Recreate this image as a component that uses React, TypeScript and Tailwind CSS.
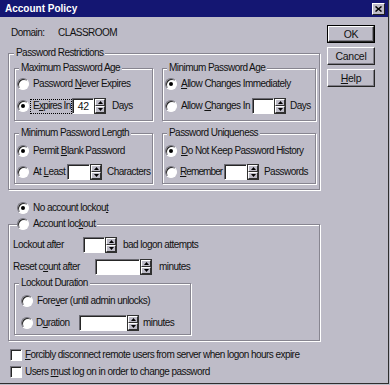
import React from "react";

const BG = "bg-[#bebcc8]";

function Radio({ checked }: { checked?: boolean }) {
  return (
    <span className="inline-flex w-[12px] h-[12px] shrink-0 rounded-full bg-white border border-t-[#77757f] border-l-[#77757f] border-b-white border-r-white shadow-[inset_1px_1px_0_#262626] items-center justify-center">
      {checked && <span className="w-[4px] h-[4px] rounded-full bg-black" />}
    </span>
  );
}

function Check() {
  return (
    <span className="inline-block w-[12px] h-[12px] shrink-0 bg-white border border-t-[#77757f] border-l-[#77757f] border-b-white border-r-white shadow-[inset_1px_1px_0_#262626]" />
  );
}

function Arrow({ up }: { up?: boolean }) {
  return (
    <div className={`w-[10px] h-[8px] ${BG} border border-t-white border-l-white border-b-[#303030] border-r-[#303030] flex items-center justify-center`}>
      <svg width="5" height="3" viewBox="0 0 5 3">
        {up ? <polygon points="2.5,0 5,3 0,3" fill="#000" /> : <polygon points="0,0 5,0 2.5,3" fill="#000" />}
      </svg>
    </div>
  );
}

function Spin({ w, value }: { w: string; value?: string }) {
  return (
    <div className="flex h-[16px] shrink-0">
      <div className={`${w} h-full bg-white border border-t-[#6b6a72] border-l-[#6b6a72] border-b-white border-r-white shadow-[inset_1px_1px_0_#262626] flex items-center justify-end pr-[4px] text-[10.5px] tracking-[-0.2px]`}>
        {value}
      </div>
      <div className="flex flex-col border border-[#303030]">
        <Arrow up />
        <Arrow />
      </div>
    </div>
  );
}

function Group({
  legend,
  className,
  legendClass,
  children,
}: {
  legend: React.ReactNode;
  className?: string;
  legendClass?: string;
  children: React.ReactNode;
}) {
  return (
    <fieldset className={`border border-[#878590] shadow-[inset_1px_1px_0_#ffffff,1px_1px_0_#ffffff] ${className ?? ""}`}>
      <legend className={`${BG} h-[12px] leading-[12px] ${legendClass ?? "px-[2px]"}`}>{legend}</legend>
      {children}
    </fieldset>
  );
}

function RadioRow({ checked, children, className }: { checked?: boolean; children: React.ReactNode; className?: string }) {
  return (
    <div className={`flex items-center h-[14px] ${className ?? ""}`}>
      <Radio checked={checked} />
      <span className="ml-[4px] whitespace-nowrap">{children}</span>
    </div>
  );
}

function Btn({ children, def }: { children: React.ReactNode; def?: boolean }) {
  return (
    <div className={`w-[48px] h-[18px] ${def ? "border border-black" : ""}`}>
      <div className="w-full h-full border border-t-white border-l-white border-b-[#262626] border-r-[#262626] shadow-[inset_-1px_-1px_0_#807e88] flex items-center justify-center text-[10.5px] tracking-[-0.3px]">
        {children}
      </div>
    </div>
  );
}

export default function App() {
  return (
    <div className={`w-[390px] h-[385px] ${BG} font-['Liberation_Sans',Arial,sans-serif] text-[10px] tracking-[-0.55px] text-[#111] leading-none`}>
      <div className="w-[389px] h-[384px] border-r border-b border-[#2e2e2e] flex flex-col">
        {/* Title bar */}
        <div className="h-[17px] bg-[#141672] flex items-center justify-between pl-[5px] pr-[3px]">
          <span className="text-white font-bold text-[10px] tracking-normal">Account Policy</span>
          <div className={`w-[13px] h-[12px] ${BG} border border-t-white border-l-white border-b-[#202020] border-r-[#202020] flex items-center justify-center`}>
            <svg width="7" height="6" viewBox="0 0 7 6">
              <path d="M0.5 0.5 L6.5 5.5 M6.5 0.5 L0.5 5.5" stroke="#000" strokeWidth="1.5" />
            </svg>
          </div>
        </div>

        <div className="flex flex-1">
          {/* Left column */}
          <div className="w-[320px] pl-[8px] flex flex-col">
            <div className="mt-[10px] h-[12px] flex items-center pl-[3px]">
              <span className="w-[47px]">Domain:</span>
              <span>CLASSROOM</span>
            </div>

            <Group legend="Password Restrictions" className="mt-[8px] w-[312px] pl-[5px] pr-[3px] pb-[5px]">
              <div className="flex gap-[9px] mt-[3px]">
                <Group legend="Maximum Password Age" className="w-[139px] pl-[2px] pb-[6px]" legendClass="ml-[2px] px-[2px]">
                  <div className="flex flex-col pt-[3px]">
                    <RadioRow>
                      Password <u>N</u>ever Expires
                    </RadioRow>
                    <div className="flex items-center h-[16px] mt-[7px]">
                      <Radio checked />
                      <span className="ml-[1px] w-[42px] h-[15px] flex items-center pl-[2px] border border-dotted border-black whitespace-nowrap tracking-[-0.7px]">
                        E<u>x</u>pires In
                      </span>
                      <Spin w="w-[22px]" value="42" />
                      <span className="ml-[6px]">Days</span>
                    </div>
                  </div>
                </Group>
                <Group legend="Minimum Password Age" className="w-[154px] pl-[2px] pb-[6px]" legendClass="ml-[2px] px-[2px]">
                  <div className="flex flex-col pt-[3px]">
                    <RadioRow checked>
                      <u>A</u>llow Changes Immediately
                    </RadioRow>
                    <div className="flex items-center h-[16px] mt-[7px]">
                      <Radio />
                      <span className="ml-[4px] w-[71px] whitespace-nowrap">
                        Allow <u>C</u>hanges In
                      </span>
                      <Spin w="w-[22px]" />
                      <span className="ml-[4px]">Days</span>
                    </div>
                  </div>
                </Group>
              </div>
              <div className="flex gap-[9px] mt-[6px]">
                <Group legend="Minimum Password Length" className="w-[139px] pl-[2px] pb-[3px]" legendClass="ml-[2px] px-[2px]">
                  <div className="flex flex-col pt-[5px]">
                    <RadioRow checked>
                      Permit <u>B</u>lank Password
                    </RadioRow>
                    <div className="flex items-center h-[16px] mt-[6px]">
                      <Radio />
                      <span className="ml-[4px] w-[34px] whitespace-nowrap">
                        At <u>L</u>east
                      </span>
                      <Spin w="w-[23px]" />
                      <span className="ml-[5px]">Characters</span>
                    </div>
                  </div>
                </Group>
                <Group legend="Password Uniqueness" className="w-[154px] pl-[2px] pb-[3px]" legendClass="ml-[2px] px-[2px]">
                  <div className="flex flex-col pt-[5px]">
                    <RadioRow checked>
                      <u>D</u>o Not Keep Password History
                    </RadioRow>
                    <div className="flex items-center h-[16px] mt-[6px]">
                      <Radio />
                      <span className="ml-[3px] w-[44px] whitespace-nowrap tracking-[-0.9px]">
                        <u>R</u>emember
                      </span>
                      <Spin w="w-[23px]" />
                      <span className="ml-[5px]">Passwords</span>
                    </div>
                  </div>
                </Group>
              </div>
            </Group>

            <RadioRow checked className="mt-[11px] pl-[9px]">
              No account lockou<u>t</u>
            </RadioRow>

            <Group
              legend={
                <span className="flex items-center h-[14px] pr-[2px]">
                  <Radio />
                  <span className="ml-[4px] whitespace-nowrap">
                    Account loc<u>k</u>out
                  </span>
                </span>
              }
              className="mt-[2px] w-[312px] pl-[4px] pb-[5px]"
              legendClass="ml-[4px] !h-[14px]"
            >
              <div className="flex items-center h-[16px] mt-[6px]">
                <span className="w-[70px]">Lockout after</span>
                <Spin w="w-[22px]" />
                <span className="ml-[6px]">bad logon attempts</span>
              </div>
              <div className="flex items-center h-[16px] mt-[6px]">
                <span className="w-[82px]">
                  Reset c<u>o</u>unt after
                </span>
                <Spin w="w-[45px]" />
                <span className="ml-[7px]">minutes</span>
              </div>
              <Group legend="Lockout Duration" className="mt-[2px] ml-[1px] w-[177px] pl-[4px] pb-[3px]">
                <RadioRow className="mt-[5px] pl-[2px]">
                  Fore<u>v</u>er (until admin unlocks)
                </RadioRow>
                <div className="flex items-center h-[16px] mt-[7px] pl-[2px]">
                  <Radio />
                  <span className="ml-[3px] w-[43px]">
                    D<u>u</u>ration
                  </span>
                  <Spin w="w-[48px]" />
                  <span className="ml-[4px]">minutes</span>
                </div>
              </Group>
            </Group>

            <div className="flex items-center h-[13px] mt-[7px] pl-[2px]">
              <Check />
              <span className="ml-[3px] whitespace-nowrap">
                <u>F</u>orcibly disconnect remote users from server when logon hours expire
              </span>
            </div>
            <div className="flex items-center h-[13px] mt-[4px] pl-[2px]">
              <Check />
              <span className="ml-[3px] whitespace-nowrap">
                Users <u>m</u>ust log on in order to change password
              </span>
            </div>
          </div>

          {/* Right column */}
          <div className="pl-[7px] pt-[8px] flex flex-col gap-[4px]">
            <Btn def>OK</Btn>
            <Btn>Cancel</Btn>
            <Btn>
              <u>H</u>elp
            </Btn>
          </div>
        </div>
      </div>
    </div>
  );
}
